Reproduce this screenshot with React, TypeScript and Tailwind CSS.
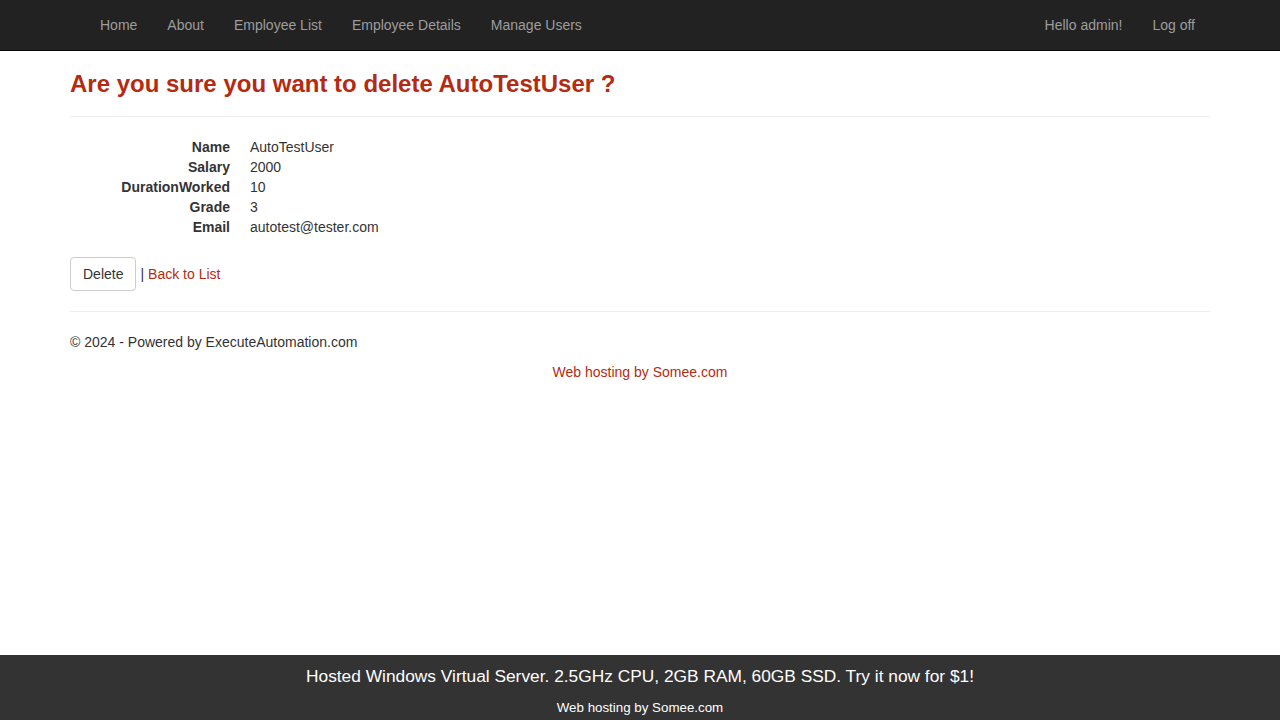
import React from "react";

export default function App() {
  const rows: [string, string][] = [
    ["Name", "AutoTestUser"],
    ["Salary", "2000"],
    ["DurationWorked", "10"],
    ["Grade", "3"],
    ["Email", "autotest@tester.com"],
  ];
  return (
    <div
      className="min-h-[720px] bg-white text-[14px] leading-[20px] text-[#333333]"
      style={{ fontFamily: '"Liberation Sans", Arial, sans-serif' }}
    >
      <nav className="h-[51px] bg-[#222222] border-b border-[#080808]">
        <div className="mx-auto flex h-[50px] w-[1170px] items-center justify-between pl-[30px] pr-[15px]">
          <ul className="flex">
            {["Home", "About", "Employee List", "Employee Details", "Manage Users"].map((l) => (
              <li key={l}>
                <a className="block px-[15px] py-[15px] text-[#9d9d9d]">{l}</a>
              </li>
            ))}
          </ul>
          <ul className="flex">
            {["Hello admin!", "Log off"].map((l) => (
              <li key={l}>
                <a className="block px-[15px] py-[15px] text-[#9d9d9d]">{l}</a>
              </li>
            ))}
          </ul>
        </div>
      </nav>
      <div className="mx-auto w-[1170px] px-[15px]">
        <h3 className="mt-[20px] mb-[19px] text-[24px] leading-[26px] font-bold text-[#b42b12]">
          Are you sure you want to delete AutoTestUser ?
        </h3>
        <div className="border-t border-[#eeeeee]" />
        <dl className="mt-[20px] mb-[20px]">
          {rows.map(([k, v]) => (
            <div key={k} className="flex">
              <dt className="w-[160px] text-right font-bold">{k}</dt>
              <dd className="ml-[20px]">{v}</dd>
            </div>
          ))}
        </dl>
        <div className="flex items-center">
          <button className="h-[34px] rounded-[4px] border border-[#cccccc] bg-white px-[12px] text-[14px] text-[#333333]">
            Delete
          </button>
          <span className="ml-[4px]">|</span>
          <a className="ml-[4px] text-[#b42b12]">Back to List</a>
        </div>
        <div className="mt-[20px] border-t border-[#eeeeee]" />
        <p className="mt-[20px]">© 2024 - Powered by ExecuteAutomation.com</p>
      </div>
      <div className="mt-[10px] text-center">
        <a className="text-[#b42b12]">Web hosting by Somee.com</a>
      </div>
      <div className="fixed bottom-0 left-0 right-0 h-[65px] bg-[#333333] text-center text-white">
        <div className="pt-[10px] text-[17.33px] leading-[22px]">
          Hosted Windows Virtual Server. 2.5GHz CPU, 2GB RAM, 60GB SSD. Try it now for $1!
        </div>
        <div className="mt-[13px] text-[13.33px] leading-[16px]">Web hosting by Somee.com</div>
      </div>
    </div>
  );
}
